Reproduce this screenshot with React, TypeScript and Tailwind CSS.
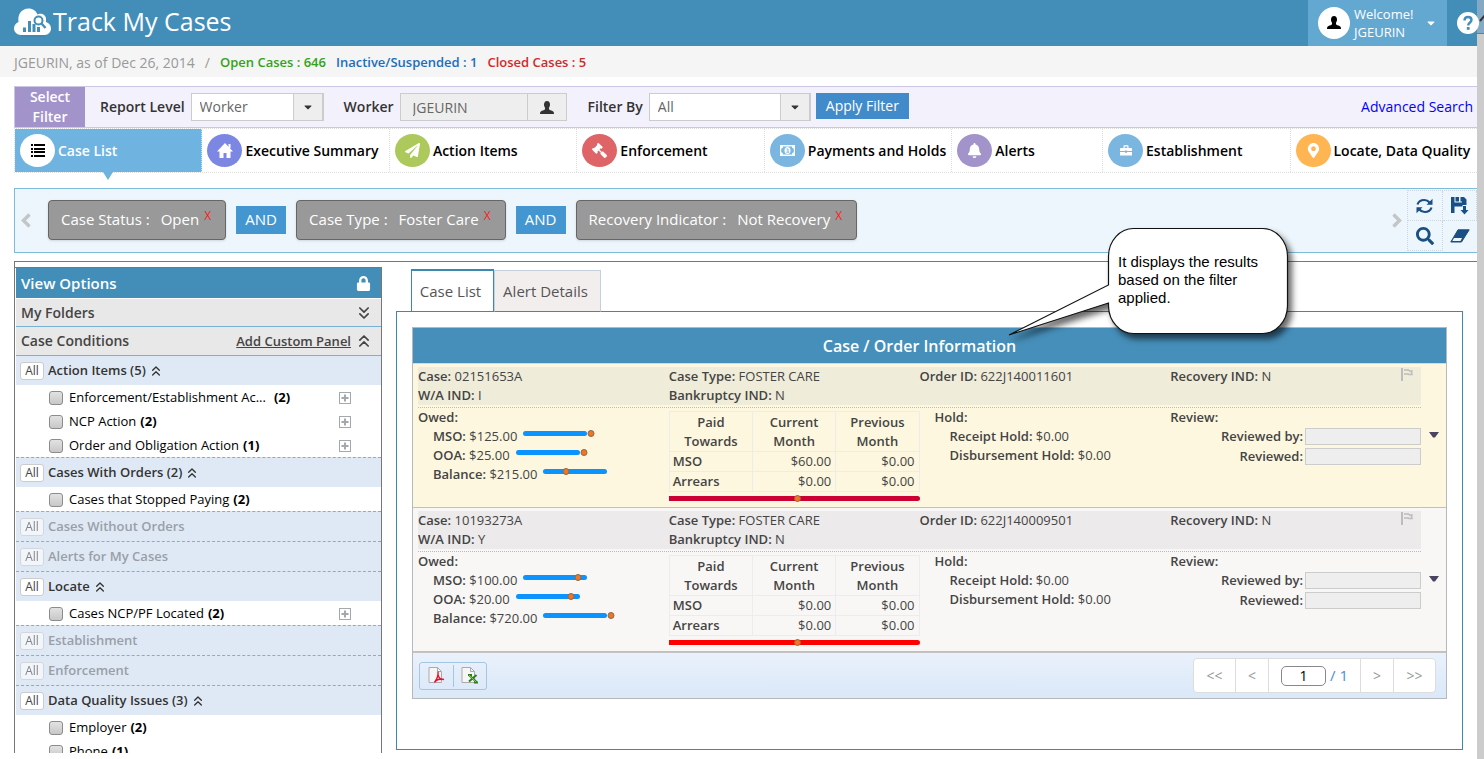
import { useState } from "react";
import type { ReactNode } from "react";
import clsx from "clsx";
import { ChevronsDown, ChevronsUp } from "lucide-react";
import {
  FaBell,
  FaCaretDown,
  FaGavel,
  FaLock,
  FaMapMarkerAlt,
  FaPaperPlane,
  FaSearch,
} from "react-icons/fa";

const tabs = [
  { label: "Case List", color: "bg-white", icon: <ListIcon /> },
  { label: "Executive Summary", color: "bg-[#7c87e3]", icon: <HomeIcon /> },
  {
    label: "Action Items",
    color: "bg-[#adc95c]",
    icon: <FaPaperPlane size={15} />,
  },
  {
    label: "Enforcement",
    color: "bg-[#de6467]",
    icon: <FaGavel size={15} className="-scale-x-100" />,
  },
  { label: "Payments and Holds", color: "bg-[#7bb6e0]", icon: <MoneyIcon /> },
  {
    label: "Alerts",
    color: "bg-[#a393cb]",
    icon: <FaBell size={15} />,
    narrow: true,
  },
  { label: "Establishment", color: "bg-[#7bb6e0]", icon: <BriefcaseIcon /> },
  {
    label: "Locate, Data Quality",
    color: "bg-[#ffb552]",
    icon: <FaMapMarkerAlt size={15} />,
  },
];

const chips = [
  { name: "Case Status", value: "Open" },
  { name: "Case Type", value: "Foster Care" },
  { name: "Recovery Indicator", value: "Not Recovery" },
];

type Condition = {
  title: string;
  count?: number;
  open?: boolean;
  items?: { label: string; count: number; plus?: boolean; wide?: boolean }[];
};

const conditions: Condition[] = [
  {
    title: "Action Items",
    count: 5,
    open: true,
    items: [
      {
        label: "Enforcement/Establishment Ac...",
        count: 2,
        plus: true,
        wide: true,
      },
      { label: "NCP Action", count: 2, plus: true },
      { label: "Order and Obligation Action", count: 1, plus: true },
    ],
  },
  {
    title: "Cases With Orders",
    count: 2,
    open: true,
    items: [{ label: "Cases that Stopped Paying", count: 2 }],
  },
  { title: "Cases Without Orders" },
  { title: "Alerts for My Cases" },
  {
    title: "Locate",
    open: true,
    items: [{ label: "Cases NCP/PF Located", count: 2, plus: true }],
  },
  { title: "Establishment" },
  { title: "Enforcement" },
  {
    title: "Data Quality Issues",
    count: 3,
    open: true,
    items: [
      { label: "Employer", count: 2 },
      { label: "Phone", count: 1 },
    ],
  },
];

const cases = [
  {
    id: "02151653A",
    wa: "I",
    order: "622J140011601",
    owed: [
      { label: "MSO", value: "$125.00", dot: 68 },
      { label: "OOA", value: "$25.00", dot: 68 },
      { label: "Balance", value: "$215.00", dot: 23 },
    ],
    paid: [
      ["MSO", "$60.00", "$0.00"],
      ["Arrears", "$0.00", "$0.00"],
    ],
    row: "bg-[#fdf7df]",
    head: "bg-[#efecd9]",
    bar: "bg-[#cc0033]",
  },
  {
    id: "10193273A",
    wa: "Y",
    order: "622J140009501",
    owed: [
      { label: "MSO", value: "$100.00", dot: 55 },
      { label: "OOA", value: "$20.00", dot: 55 },
      { label: "Balance", value: "$720.00", dot: 68 },
    ],
    paid: [
      ["MSO", "$0.00", "$0.00"],
      ["Arrears", "$0.00", "$0.00"],
    ],
    row: "bg-[#f8f7f5]",
    head: "bg-[#eceaeb]",
    bar: "bg-[#ff0000]",
  },
];

function UserIcon() {
  return (
    <svg width="14" height="13" viewBox="0 0 14 13" fill="currentColor">
      <path d="M7 0C9 0 10 1.5 10 3.6C10 5 9.6 6 9 6.8V8.3C9.5 9 11 9.4 12.5 10C13.5 10.5 14 11.2 14 13H0C0 11.2.5 10.5 1.5 10C3 9.4 4.5 9 5 8.3V6.8C4.4 6 4 5 4 3.6C4 1.5 5 0 7 0Z" />
    </svg>
  );
}

function HomeIcon() {
  return (
    <svg width="16" height="15" viewBox="0 0 16 15" fill="currentColor">
      <path d="M8 0L16 8.500H13.500V15H9.500V10H6.500V15H2.500V8.500H0Z" />
      <path d="M11.500 1H13.500V5H11.500Z" />
    </svg>
  );
}

function BriefcaseIcon() {
  return (
    <svg width="12" height="11" viewBox="0 0 12 11" fill="currentColor">
      <path d="M3.500 3V1.200C3.500 .6 3.800 .2 4.500 .2H7.500C8.200 .2 8.500 .6 8.500 1.200V3H11C11.600 3 12 3.300 12 4V6H7V5.500H5V6H0V4C0 3.300.4 3 1 3ZM4.700 3H7.300V1.400H4.700Z" />
      <path d="M0 7H5V7.800H7V7H12V10.500H0Z" />
    </svg>
  );
}

function ListIcon() {
  return (
    <svg width="14" height="13" viewBox="0 0 14 13" fill="#000">
      {[0, 4, 7, 11].map((y) => (
        <g key={y}>
          <rect x="0" y={y} width="2" height="2" />
          <rect x="3" y={y} width="11" height="2" />
        </g>
      ))}
    </svg>
  );
}

function MoneyIcon() {
  return (
    <svg width="15" height="11" viewBox="0 0 15 11" fill="none">
      <rect width="15" height="11" fill="#fff" />
      <path
        d="M3 1.5H12C12 3 12.6 3.5 13.8 3.5V7.5C12.6 7.5 12 8 12 9.5H3C3 8 2.4 7.5 1.2 7.5V3.5C2.4 3.5 3 3 3 1.5Z"
        fill="#7bb6e0"
      />
      <ellipse cx="7.5" cy="5.5" rx="3" ry="3.5" fill="#fff" />
      <path d="M6.5 4H8V7.2M6.3 7.2H9" stroke="#7bb6e0" />
    </svg>
  );
}

function Logo() {
  return (
    <svg width="37" height="29" viewBox="0 0 37 29">
      <path
        d="M7 27C3 27 0 24 0 20.500C0 17.500 2 15 4.500 14C4 10 4.500 7.500 6 5C8 2 11 .5 14.500 .5C19 .5 22 3 23.500 6.500C25 5.500 29 5 31 8C32.500 10 32 12 32 14C35 15 37 17.500 37 20.500C37 24 34.500 27 30.500 27Z"
        fill="#fff"
      />
      <g fill="#438eb9">
        <rect x="9" y="19.500" width="3" height="4.500" />
        <rect x="14" y="13" width="3" height="11" />
        <rect x="18.500" y="16" width="3" height="8" />
        <rect x="23" y="19" width="3" height="5" />
      </g>
      <circle
        cx="24.500"
        cy="12.500"
        r="4"
        fill="#fff"
        stroke="#438eb9"
        strokeWidth="2"
      />
      <path d="M27.500 15.500L31.500 20" stroke="#438eb9" strokeWidth="2.400" />
      <path d="M7 28H31" stroke="#3a7da3" opacity=".6" />
    </svg>
  );
}

function RefreshIcon() {
  return (
    <svg width="17" height="16" viewBox="0 0 17 16" fill="none">
      <path
        d="M1.500 6.500C2.500 3.500 5.200 2 8.200 2C10.500 2 12.300 2.900 13.600 4.500M15.500 9.500C14.500 12.500 11.800 14 8.800 14C6.500 14 4.700 13.100 3.400 11.500"
        stroke="#194f85"
        strokeWidth="2.200"
      />
      <path d="M16.500 .8V6.800H10.500ZM.5 15.200V9.200H6.500Z" fill="#194f85" />
    </svg>
  );
}

function SaveIcon() {
  return (
    <svg width="19" height="18" viewBox="0 0 19 18">
      <path
        d="M1 0H4.500V5.500H12V0H14L16.500 2.500V8H12.500V9.500H4.500V16H1Z"
        fill="#194f85"
      />
      <path d="M5.500 0H9V4.500H5.500ZM10.500 0H12V4.500H10.500Z" fill="#194f85" />
      <path d="M13 9H16V13H18.500L14.500 17.500L10.500 13H13Z" fill="#194f85" />
    </svg>
  );
}

function EraserIcon() {
  return (
    <svg width="20" height="14" viewBox="0 0 20 14">
      <path
        d="M8 .8H19.200L11.500 13H.8Z"
        fill="#194f85"
        stroke="#194f85"
        strokeLinejoin="round"
      />
      <path d="M4 9H12L10.500 12H2.300Z" fill="#edf6fc" />
    </svg>
  );
}

function Chevron({ className }: { className?: string }) {
  return (
    <svg width="10" height="15" viewBox="0 0 10 15" className={className}>
      <path
        d="M8.500 1.500L2.500 7.500L8.500 13.500"
        fill="none"
        stroke="#c3c6c8"
        strokeWidth="3.400"
      />
    </svg>
  );
}

function FlagIcon() {
  return (
    <svg width="12" height="13" viewBox="0 0 12 13" fill="none" stroke="#bdbdbd">
      <path d="M1 0V13" strokeWidth="2" />
      <path
        d="M3 2H7.500L8.500 3H11L10.500 4.500L11 6.500H8L7 6H3"
        strokeWidth="1.500"
      />
    </svg>
  );
}

function FilterSelect({
  id,
  value,
  className,
}: {
  id: string;
  value: string;
  className: string;
}) {
  return (
    <div className={clsx("relative h-7", className)}>
      <select
        id={id}
        className="h-full w-full appearance-none border border-[#ccc] bg-white pl-2 text-sm text-[#666]"
      >
        <option>{value}</option>
      </select>
      <span className="pointer-events-none absolute inset-y-0 right-0 flex w-[31px] items-center justify-center border border-r-2 border-[#ccc] bg-[#eee] text-[#333]">
        <FaCaretDown size={12} />
      </span>
    </div>
  );
}

function Slider({ dot }: { dot: number }) {
  return (
    <span className="relative mb-2 ml-[6px] inline-block h-[5px] w-16 rounded-full bg-[#0b93ff] align-middle">
      <span
        className="absolute -top-px size-[7px] -translate-x-1/2 rounded-full border border-[#8a6a4a] bg-[#f47421]"
        style={{ left: dot }}
      />
    </span>
  );
}

function Field({ label, children }: { label: string; children: ReactNode }) {
  return (
    <div>
      <b className="font-semibold">{label}:</b> {children}
    </div>
  );
}

function CaseRow({ data }: { data: (typeof cases)[number] }) {
  return (
    <div
      className={clsx(
        "flex h-36 border-b border-[#aac6dc] pt-[3px] pl-[5px] leading-[19px]",
        data.row
      )}
    >
      <div className="flex-1">
        <div className={clsx("grid h-[38px] grid-cols-4", data.head)}>
          <div>
            <Field label="Case">{data.id}</Field>
            <Field label="W/A IND">{data.wa}</Field>
          </div>
          <div>
            <Field label="Case Type">FOSTER CARE</Field>
            <Field label="Bankruptcy IND">N</Field>
          </div>
          <Field label="Order ID">{data.order}</Field>
          <div className="flex justify-between pr-2">
            <Field label="Recovery IND">N</Field>
            <button className="flex h-[15px] items-center" aria-label="Flag">
              <FlagIcon />
            </button>
          </div>
        </div>
        <div className="mt-[2px] grid grid-cols-4 border-t border-dotted border-[#bbb]">
          <div>
            <b className="font-semibold">Owed:</b>
            {data.owed.map((o) => (
              <div key={o.label} className="h-[19px] pl-[15px]">
                <b className="font-semibold">{o.label}:</b> {o.value}
                <Slider dot={o.dot} />
              </div>
            ))}
          </div>
          <div className="pt-[3px]">
            <table className="w-full table-fixed border-collapse border border-[#ececec]">
              <thead>
                <tr className="h-10">
                  {["Paid Towards", "Current Month", "Previous Month"].map(
                    (h) => (
                      <th
                        key={h}
                        className="border border-[#ececec] px-3 py-0 font-semibold"
                      >
                        {h}
                      </th>
                    )
                  )}
                </tr>
              </thead>
              <tbody>
                {data.paid.map(([name, cur, prev]) => (
                  <tr key={name} className="h-5">
                    <th className="border border-[#ececec] p-0 pl-[3px] text-left font-semibold">
                      {name}
                    </th>
                    <td className="border border-[#ececec] p-0 pr-1 text-right">
                      {cur}
                    </td>
                    <td className="border border-[#ececec] p-0 pr-1 text-right">
                      {prev}
                    </td>
                  </tr>
                ))}
              </tbody>
            </table>
            <div
              className={clsx("relative mt-1 h-[5px] rounded-r-full", data.bar)}
            >
              <span className="absolute -top-px left-1/2 size-[7px] rounded-full border border-[#8a6a4a] bg-[#f47421]" />
            </div>
          </div>
          <div className="pl-[15px]">
            <b className="font-semibold">Hold:</b>
            <div className="pl-[15px]">
              <Field label="Receipt Hold">$0.00</Field>
              <Field label="Disbursement Hold">$0.00</Field>
            </div>
          </div>
          <div>
            <b className="block h-[18px] font-semibold">Review:</b>
            {["Reviewed by", "Reviewed"].map((r) => (
              <label
                key={r}
                className="flex h-5 items-center justify-end gap-[2px] font-semibold"
              >
                {r}:
                <input
                  readOnly
                  className="h-[17px] w-[116px] border border-[#ccc] bg-[#eee]"
                />
              </label>
            ))}
          </div>
        </div>
      </div>
      <button
        className="flex w-[25px] justify-center pt-[65px] text-[#4b4460]"
        aria-label="Expand case"
      >
        <svg width="10" height="6" viewBox="0 0 10 6" fill="currentColor">
          <path d="M0 0H10L6 5.500H4Z" />
        </svg>
      </button>
    </div>
  );
}

function Callout() {
  return (
    <div className="pointer-events-none absolute top-[228px] right-[196px] h-[106px] w-[180px] text-[15px] leading-[18px] text-black">
      <svg
        width="280"
        height="110"
        viewBox="-100 0 280 110"
        className="absolute top-0 right-0 overflow-visible drop-shadow-[4px_5px_3px_rgba(0,0,0,0.6)]"
      >
        <path
          d="M26 .5H154A25 28 0 0 1 179.500 28V78A25 28 0 0 1 154 105.500H26A25 28 0 0 1 .5 78V75L-99 107L.5 57V28A25 28 0 0 1 26 .5Z"
          fill="#fff"
          stroke="#111"
          strokeWidth="1.200"
        />
      </svg>
      <p className="relative pt-[25px] pr-5 pl-[10px] font-['Liberation_Sans',sans-serif]">
        It displays the results based on the filter applied.
      </p>
    </div>
  );
}

function Sidebar() {
  return (
    <aside className="mt-[5px] flex w-[367px] shrink-0 flex-col overflow-hidden border-t border-r border-[#777] pl-px text-[#333]">
      <div className="flex h-[31px] shrink-0 items-center justify-between border-b border-white bg-[#438eb9] pr-[10px] pl-[5px] text-[15px] font-semibold text-white">
        View Options
        <FaLock size={15} />
      </div>
      <button className="flex h-7 shrink-0 items-center justify-between border-b border-[#79b0d8] bg-[#e8e8e8] pr-[7px] pl-[5px] text-sm font-semibold text-[#444]">
        My Folders
        <ChevronsDown size={20} strokeWidth={2} />
      </button>
      <div className="flex h-[29px] shrink-0 items-center border-b border-[#79b0d8] bg-[#e8e8e8] pr-[7px] pl-[5px] text-sm font-semibold text-[#444]">
        <span className="flex-1">Case Conditions</span>
        <a href="#panel" className="mr-[3px] text-[13px] underline">
          Add Custom Panel
        </a>
        <ChevronsUp size={20} strokeWidth={2} />
      </div>
      {conditions.map((c, i) => (
        <section key={c.title} className="shrink-0">
          <div
            className={clsx(
              "flex items-center bg-[#dfe9f5] pl-1 font-semibold",
              i > 0
                ? "h-[30px] border-t border-dashed border-[#a5a5a5]"
                : "h-[29px]"
            )}
          >
            <button
              className={clsx(
                "mr-1 h-[18px] w-6 rounded-[3px] border border-[#ccc] bg-white text-xs leading-4 font-normal text-[#444]",
                !c.open && "opacity-60"
              )}
            >
              All
            </button>
            <span className={c.open ? "" : "text-[#999fa8]"}>
              {c.title}
              {c.count && ` (${c.count})`}
            </span>
            {c.open && (
              <ChevronsUp size={16} strokeWidth={2} className="ml-[2px]" />
            )}
          </div>
          {c.items?.map((item) => (
            <div
              key={item.label}
              className="flex h-6 items-center pt-px pr-[30px] pl-[33px] text-black"
            >
              <label className="flex flex-1 items-center">
                <input
                  type="checkbox"
                  className="mr-[6px] size-[14px] appearance-none rounded-[3px] border border-[#8c8c8c] bg-linear-to-b from-[#e2e2e2] to-[#c8c8c8]"
                />
                {item.label}
                <b className={item.wide ? "ml-2" : "ml-1"}>({item.count})</b>
              </label>
              {item.plus && (
                <button aria-label="Expand">
                  <svg
                    width="12"
                    height="12"
                    viewBox="0 0 12 12"
                    fill="none"
                    stroke="#a3a8ad"
                  >
                    <rect x=".5" y=".5" width="11" height="11" />
                    <path d="M6 2.500V9.500M2.500 6H9.500" strokeWidth="2" />
                  </svg>
                </button>
              )}
            </div>
          ))}
        </section>
      ))}
    </aside>
  );
}

export default function App() {
  const [active, setActive] = useState("Case List");

  return (
    <div className="relative flex h-screen overflow-hidden bg-white font-['Open_Sans',sans-serif] text-[13px] text-[#444]">
      <main className="flex min-w-0 flex-1 flex-col pb-[6px]">
        <header className="flex h-[46px] shrink-0 bg-[#438eb9] text-white">
          <h1 className="flex flex-1 items-center gap-[2px] pb-[2px] pl-[14px] text-[25px]">
            <Logo />
            Track My Cases
          </h1>
          <button className="flex w-[139px] items-center bg-[#62a8d1] pb-px pl-[10px] text-left leading-[18px]">
            <span className="mr-1 flex size-8 items-center justify-center rounded-full bg-white text-black">
              <UserIcon />
            </span>
            <span>
              Welcome!
              <br />
              JGEURIN
            </span>
            <FaCaretDown size={12} className="ml-3" />
          </button>
          <a
            href="#help"
            aria-label="Help"
            className="z-10 -mr-[2px] ml-[10px] flex size-[22px] self-center rounded-full bg-white"
          >
            <svg width="22" height="22" viewBox="0 0 22 22" fill="none">
              <path
                d="M7.500 8.500C7.500 6.200 9 5 11 5C13.200 5 14.500 6.300 14.500 8C14.500 10.500 11.200 10.500 11.200 13.500"
                stroke="#438eb9"
                strokeWidth="2.400"
              />
              <rect x="9.800" y="15" width="2.800" height="2.800" fill="#438eb9" />
            </svg>
          </a>
        </header>

        <div className="flex h-[31px] shrink-0 items-center bg-[#f5f5f5] pt-[3px] pl-[14px] font-semibold">
          <span className="text-sm font-normal text-[#999]">
            JGEURIN, as of Dec 26, 2014
          </span>
          <span className="mx-[10px] text-sm font-normal text-[#999]">/</span>
          <span className="text-[#33a31c]">Open Cases : 646</span>
          <span className="ml-[10px] text-[#1a6fba]">
            Inactive/Suspended : 1
          </span>
          <span className="ml-[10px] text-[#d02a2a]">Closed Cases : 5</span>
        </div>

        <form className="mt-[9px] ml-[14px] flex h-[42px] shrink-0 items-center border border-r-0 border-[#cbc6e3] bg-[#f3f1fc] pr-1 text-sm font-semibold text-[#333]">
          <div className="w-[70px] bg-[#a393cb] text-center leading-5 text-white">
            Select
            <br />
            Filter
          </div>
          <label htmlFor="level" className="mr-[6px] ml-[15px]">
            Report Level
          </label>
          <FilterSelect
            id="level"
            value="Worker"
            className="w-[133px] font-normal"
          />
          <label htmlFor="worker" className="mr-[6px] ml-5">
            Worker
          </label>
          <input
            id="worker"
            readOnly
            value="JGEURIN"
            className="h-7 w-32 border border-[#ccc] bg-[#eee] pl-3 font-normal text-[#666]"
          />
          <button
            type="button"
            aria-label="Pick worker"
            className="flex h-7 w-[39px] items-center justify-center border border-l-0 border-[#ccc] bg-[#eee]"
          >
            <UserIcon />
          </button>
          <label htmlFor="by" className="mr-[6px] ml-[21px]">
            Filter By
          </label>
          <FilterSelect id="by" value="All" className="w-[162px] font-normal" />
          <button
            type="button"
            className="mb-[2px] ml-[5px] h-[26px] w-[93px] bg-[#428bca] font-normal text-white"
          >
            Apply Filter
          </button>
          <a href="#search" className="ml-auto font-normal text-[#0000ff]">
            Advanced Search
          </a>
        </form>

        <nav className="ml-[14px] flex h-[45px] shrink-0 border-y border-l border-dotted border-[#ddd] text-sm font-semibold text-black">
          {tabs.map((t) => (
            <button
              key={t.label}
              onClick={() => setActive(t.label)}
              className={clsx(
                "relative flex items-center border-r border-dotted border-[#ddd] pl-[5px] whitespace-nowrap last:border-r-0",
                t.narrow ? "flex-[150_1_0px]" : "flex-[188_1_0px]",
                active === t.label && "bg-[#6fb3e0] text-white"
              )}
            >
              <span
                className={clsx(
                  "mr-[3px] flex h-[33px] w-[35px] shrink-0 items-center justify-center rounded-[50%] text-white",
                  t.color
                )}
              >
                {t.icon}
              </span>
              {t.label}
              {active === t.label && (
                <span className="absolute top-full left-1/2 -ml-[5px] border-x-[5px] border-t-8 border-x-transparent border-t-[#6fb3e0]" />
              )}
            </button>
          ))}
        </nav>

        <div className="mt-[15px] ml-[14px] flex h-[65px] shrink-0 items-center border border-r-0 border-[#7dbbdc] bg-[#edf6fc] pl-[6px] text-[15px] text-white">
          <button aria-label="Previous" className="mr-[17px]">
            <Chevron />
          </button>
          {chips.map((c, i) => (
            <div key={c.name} className="flex items-center pb-[2px]">
              {i > 0 && (
                <span className="mx-[10px] flex h-7 w-[50px] items-center justify-center bg-[#4496d0]">
                  AND
                </span>
              )}
              <div className="flex h-10 items-center rounded-[4px] border border-[#666] bg-[#999] pr-[14px] pl-3 shadow-sm">
                {c.name} :<span className="ml-[11px]">{c.value}</span>
                <button
                  className="mb-2 ml-[5px] text-xs text-[#ff1a1a]"
                  aria-label={`Remove ${c.name}`}
                >
                  X
                </button>
              </div>
            </div>
          ))}
          <button aria-label="Next" className="mr-[5px] ml-auto">
            <Chevron className="rotate-180" />
          </button>
          <div className="grid h-[61px] w-[70px] grid-cols-2 grid-rows-2 divide-x divide-y divide-dotted divide-[#ccd6e0] border-t border-l border-dotted border-[#ccd6e0] text-[#194f85] *:flex *:items-center *:justify-center">
            <button aria-label="Refresh">
              <RefreshIcon />
            </button>
            <button aria-label="Save">
              <SaveIcon />
            </button>
            <button aria-label="Search">
              <FaSearch size={18} />
            </button>
            <button aria-label="Clear">
              <EraserIcon />
            </button>
          </div>
        </div>

        <div className="mt-2 ml-[14px] flex min-h-0 flex-1 border-t border-l border-[#777]">
          <Sidebar />
          <div className="mt-[7px] mr-[14px] mb-[3px] ml-[14px] flex min-w-0 flex-1 flex-col">
            <div className="z-10 -mb-px flex h-[43px] shrink-0 items-stretch pl-[15px] text-[15px] text-[#555]">
              <button className="mb-px w-[83px] border border-t-2 border-b-0 border-[#3b89ae] bg-white pr-1">
                Case List
              </button>
              <button className="mt-px w-[107px] border border-[#c5d0dc] border-b-[#3b89ae] bg-[#f3eeee] pr-1">
                Alert Details
              </button>
            </div>
            <div className="flex-1 border border-[#3b89ae] p-[15px]">
              <div className="border border-[#b5b9be]">
                <h2 className="h-9 border-b border-[#c8dcea] bg-[#468fba] pr-5 text-center text-base leading-9 font-semibold text-white">
                  Case / Order Information
                </h2>
                {cases.map((c) => (
                  <CaseRow key={c.id} data={c} />
                ))}
                <div className="flex h-[46px] items-center justify-between border-t border-[#c4c4c4] bg-linear-to-b from-[#eaf1fc] to-[#dae8f8] pr-[10px] pl-[6px]">
                  <div className="flex h-7 w-[68px] items-center divide-x divide-[#a3c7e2] rounded-[3px] border border-[#a3c7e2] *:flex *:h-[22px] *:flex-1 *:items-center *:justify-center">
                    <button aria-label="Export to PDF">
                      <svg
                        width="17"
                        height="17"
                        viewBox="0 0 17 17"
                        fill="none"
                      >
                        <path
                          d="M1 .5H9.500L13.500 4.500V15.500H1Z"
                          fill="#f6f6f6"
                          stroke="#aaa"
                        />
                        <path d="M9.500 .5V4.500H13.500" stroke="#aaa" />
                        <path
                          d="M10 4.500C10.500 8 9 12 6.500 15.500M6.500 15C9 12.500 12.500 11.500 16 12.500M10 8C10.500 10 12 12 13.500 13"
                          stroke="#e8112d"
                          strokeWidth="1.400"
                        />
                      </svg>
                    </button>
                    <button aria-label="Export to Excel">
                      <svg
                        width="17"
                        height="17"
                        viewBox="0 0 17 17"
                        fill="none"
                      >
                        <path
                          d="M1 .5H9.500L13.500 4.500V15.500H1Z"
                          fill="#f6f6f6"
                          stroke="#aaa"
                        />
                        <path d="M9.500 .5V4.500H13.500" stroke="#aaa" />
                        <path
                          d="M8 8L15.500 15M15.500 8L8 14.500M7 8H11M13 15.500H17"
                          stroke="#2f7d1c"
                          strokeWidth="2"
                        />
                        <path
                          d="M8 8L15 15"
                          stroke="#9bd36a"
                          strokeWidth=".8"
                        />
                      </svg>
                    </button>
                  </div>
                  <div className="flex h-[35px] divide-x divide-[#ddd] rounded-[4px] border border-[#ddd] bg-white text-sm text-[#999]">
                    <button className="w-[42px]">&lt;&lt;</button>
                    <button className="w-[33px]">&lt;</button>
                    <label className="flex w-[92px] items-center gap-1 pl-3 text-[15px] text-[#4a8fd0]">
                      <input
                        defaultValue="1"
                        aria-label="Page"
                        className="h-5 w-[45px] rounded-[5px] border border-[#888] text-center text-sm text-black"
                      />
                      / 1
                    </label>
                    <button className="w-[33px]">&gt;</button>
                    <button className="w-[41px]">&gt;&gt;</button>
                  </div>
                </div>
              </div>
            </div>
          </div>
        </div>
      </main>
      <div className="w-[7px] shrink-0 bg-[#ccc]">
        <div className="flex h-[34px] items-center overflow-hidden border-b border-[#777] bg-[#83a9c4]">
          <svg width="7" height="12" viewBox="0 0 7 12" fill="none">
            <path d="M3 10L8 4" stroke="#333" strokeWidth="2" />
          </svg>
        </div>
      </div>
      <Callout />
    </div>
  );
}
